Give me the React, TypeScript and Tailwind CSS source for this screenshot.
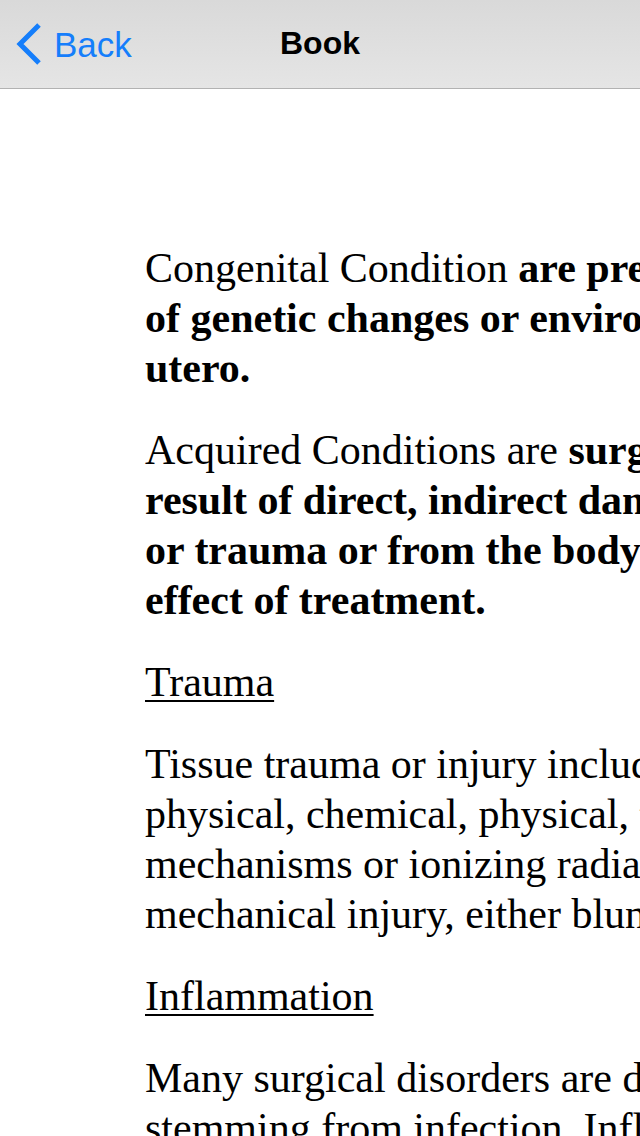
import React from 'react';

const serif = { fontFamily: '"Liberation Serif", "Times New Roman", serif' };

function NavBar() {
  return (
    <div
      className="relative h-[89px] border-b border-[#b2b2b2] bg-gradient-to-b from-[#d9d9d9] to-[#e5e5e5] flex items-center"
      style={{ fontFamily: '"Liberation Sans", Arial, sans-serif' }}
    >
      <button className="flex items-center pl-[15px] text-[#157efb]">
        <svg width="28" height="44" viewBox="0 0 28 44" fill="none">
          <polyline
            points="24,3 5,22 24,41"
            stroke="#157efb"
            strokeWidth="5"
            strokeLinecap="butt"
            strokeLinejoin="miter"
          />
        </svg>
        <span className="ml-[11px] text-[35px] leading-none">Back</span>
      </button>
      <div className="absolute left-0 right-0 text-center pointer-events-none">
        <span className="text-[32px] font-bold text-black leading-none">Book</span>
      </div>
    </div>
  );
}

function Para({ children }: { children: React.ReactNode }) {
  return <p className="mb-[32px] whitespace-nowrap">{children}</p>;
}

export default function App() {
  return (
    <div className="w-[640px] h-[1136px] overflow-hidden bg-white">
      <NavBar />
      <div
        className="w-[1100px] pl-[145px] pt-[154px] text-[42px] leading-[50px] text-black"
        style={serif}
      >
        <Para>
          Congenital Condition <b>are present at birth as a result</b>
          <br />
          <b>of genetic changes or environmental factors in</b>
          <br />
          <b>utero.</b>
        </Para>
        <Para>
          Acquired Conditions are <b>surgical conditions that are the</b>
          <br />
          <b>result of direct, indirect damage from disease</b>
          <br />
          <b>or trauma or from the body's response or the</b>
          <br />
          <b>effect of treatment.</b>
        </Para>
        <Para>
          <span className="underline decoration-2 underline-offset-4">Trauma</span>
        </Para>
        <Para>
          Tissue trauma or injury includes damage from
          <br />
          physical, chemical, physical, thermal
          <br />
          mechanisms or ionizing radiation. In
          <br />
          mechanical injury, either blunt or penetrating
        </Para>
        <Para>
          <span className="underline decoration-2 underline-offset-4">Inflammation</span>
        </Para>
        <Para>
          Many surgical disorders are due to inflammation
          <br />
          stemming from infection. Inflammation is the
        </Para>
      </div>
    </div>
  );
}
